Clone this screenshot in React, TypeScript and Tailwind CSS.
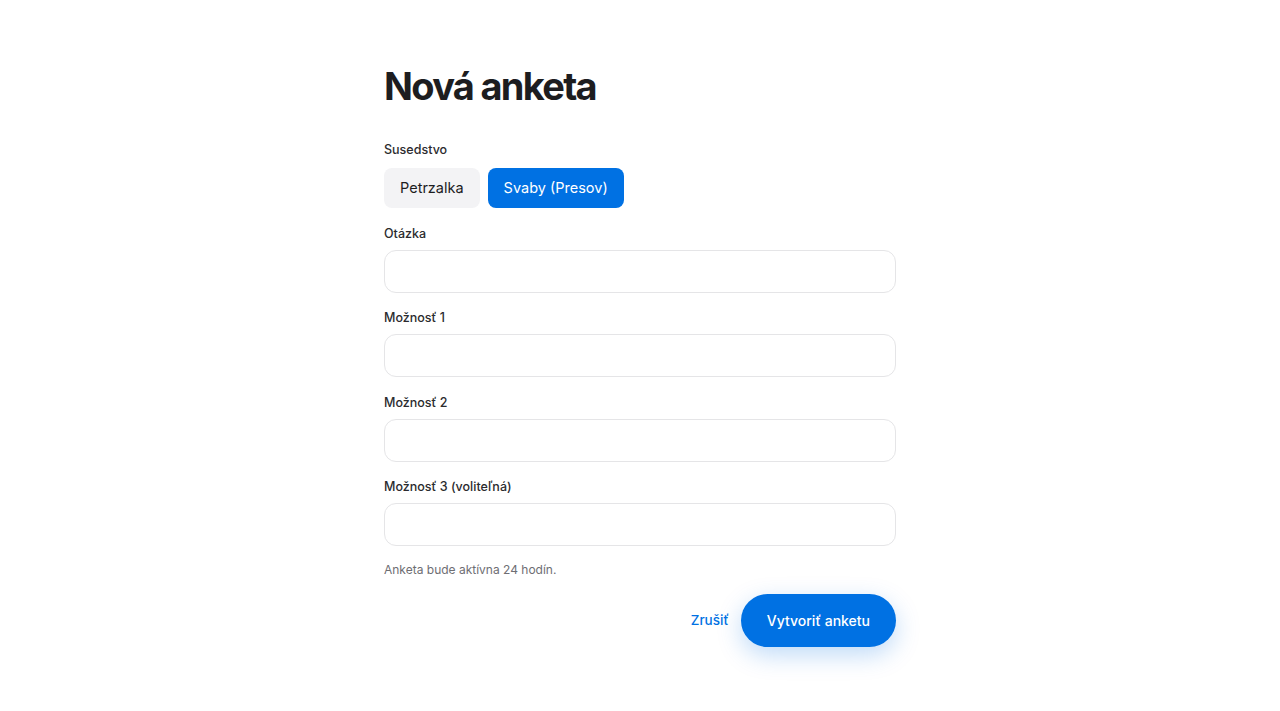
import React from "react";

const font = { fontFamily: "Inter, 'Noto Sans', sans-serif" };

function Field({ label }: { label: string }) {
  return (
    <div className="flex flex-col">
      <label className="text-[12.5px] leading-5 font-medium text-[#2b2b2e] mb-1.5">{label}</label>
      <input
        type="text"
        className="h-[43px] w-full rounded-xl border border-[#e5e5e7] bg-white px-4 text-[15px] outline-none"
      />
    </div>
  );
}

export default function App() {
  return (
    <div className="min-h-[711px] w-full bg-white" style={font}>
      <div className="mx-auto w-[512px] pt-[62px]">
        <h1 className="text-[38px] leading-[48px] font-bold tracking-[-0.045em] text-[#1d1d1f]">Nová anketa</h1>
        <div className="mt-[30px] flex flex-col">
          <label className="text-[12.5px] leading-5 font-medium text-[#2b2b2e] mb-2">Susedstvo</label>
          <div className="flex gap-2">
            <button className="h-10 rounded-lg bg-[#f3f3f5] px-4 text-[14.5px] text-[#1d1d1f]">Petrzalka</button>
            <button className="h-10 rounded-lg bg-[#0071e3] px-4 text-[14.5px] text-white">Svaby (Presov)</button>
          </div>
        </div>
        <div className="mt-4 flex flex-col gap-[15.33px]">
          <Field label="Otázka" />
          <Field label="Možnosť 1" />
          <Field label="Možnosť 2" />
          <Field label="Možnosť 3 (voliteľná)" />
        </div>
        <p className="mt-4 text-[12px] leading-4 text-[#6e6e73]">Anketa bude aktívna 24 hodín.</p>
        <div className="mt-4 flex items-center justify-end gap-3">
          <button className="text-[13.5px] font-medium text-[#0071e3]">Zrušiť</button>
          <button className="h-[53px] rounded-full bg-[#0071e3] px-[26px] text-[14px] font-medium text-white shadow-[0_8px_24px_rgba(0,113,227,0.25)]">
            Vytvoriť anketu
          </button>
        </div>
      </div>
    </div>
  );
}
